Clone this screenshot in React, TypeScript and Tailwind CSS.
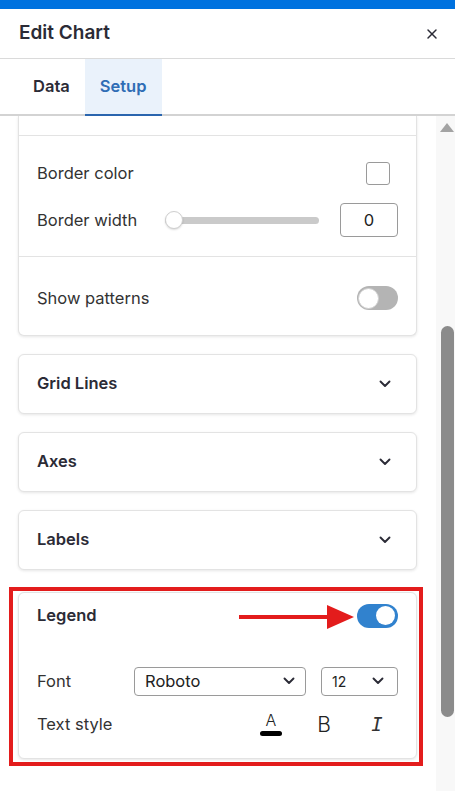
import React from 'react';
import { X } from 'lucide-react';

const cardClass =
  'bg-white border border-[#e3e3e3] rounded-[6px] shadow-[0_1px_3px_rgba(0,0,0,0.10)]';

const Chevron: React.FC<{ className?: string }> = ({ className }) => (
  <svg width="12" height="8" viewBox="0 0 12 8" className={className} fill="none">
    <path d="M1.5 1.5 L6 6 L10.5 1.5" stroke="#2b2b36" strokeWidth="1.9" strokeLinecap="round" strokeLinejoin="round" />
  </svg>
);

const Toggle: React.FC<{ on?: boolean }> = ({ on }) => (
  <div
    className={
      on
        ? 'w-[41px] h-[24px] rounded-full bg-[#3182ce] flex items-center justify-end pr-[3px]'
        : 'w-[41px] h-[24px] rounded-full bg-[#b4b4b4] flex items-center justify-start pl-[1px]'
    }
  >
    <div className={on ? 'w-[19px] h-[19px] rounded-full bg-white' : 'w-[21px] h-[21px] rounded-full bg-white border border-[#d0d0d0]'} />
  </div>
);

const CollapsedSection: React.FC<{ title: string }> = ({ title }) => (
  <div className={`${cardClass} h-[60px] flex items-center justify-between pl-[18px] pr-[25px]`}>
    <span className="text-[16.5px] font-semibold text-[#2b2b36]">{title}</span>
    <Chevron />
  </div>
);

export default function App() {
  return (
    <div className="w-[455px] h-[791px] bg-white overflow-hidden flex flex-col font-['Inter',sans-serif]">
      <div className="h-[9px] bg-[#0072df] shrink-0" />

      <header className="h-[50px] shrink-0 flex items-center justify-between pl-[19px] pr-[15px] border-b border-[#dadada]">
        <h1 className="text-[19px] font-semibold text-[#2b2b36]">Edit Chart</h1>
        <X className="w-[16px] h-[16px] text-[#2b2b36]" strokeWidth={2.2} />
      </header>

      <nav className="h-[57px] shrink-0 flex pl-[18px] border-b-2 border-[#d3d3d3]">
        <div className="px-[15px] flex items-center text-[16.5px] font-semibold text-[#2b2b36]">Data</div>
        <div className="px-[15px] flex items-center text-[16.5px] font-semibold text-[#2f6db5] bg-[#eaf2fb] border-b-2 border-[#2a65ae] -mb-[2px]">
          Setup
        </div>
      </nav>

      <div className="flex flex-1 min-h-0">
        <div className="flex-1 overflow-hidden pl-[18px] pr-[19px] flex flex-col">
          {/* partly scrolled card */}
          <div className="bg-white border-x border-b border-[#e3e3e3] rounded-b-[6px] shadow-[0_1px_3px_rgba(0,0,0,0.10)] shrink-0">
            <div className="h-[19px]" />
            <div className="border-t border-[#e3e3e3] px-[18px] pt-[26px] pb-[19px] text-[16.5px] text-[#333333]">
              <div className="h-[23px] flex items-center justify-between">
                <span>Border color</span>
                <div className="w-[24px] h-[23px] border border-[#9a9a9a] rounded-[3px] mr-[8px]" />
              </div>
              <div className="h-[34px] mt-[18px] flex items-center">
                <span className="w-[128px]">Border width</span>
                <div className="relative w-[154px] h-[18px] flex items-center">
                  <div className="w-full h-[7px] rounded-full bg-[#cacaca]" />
                  <div className="absolute left-0 top-0 w-[18px] h-[18px] rounded-full bg-white border border-[#cfcfcf] shadow-[0_1px_2px_rgba(0,0,0,0.15)]" />
                </div>
                <div className="ml-auto w-[58px] h-[34px] border border-[#9a9a9a] rounded-[4px] flex items-center justify-center text-[#222]">
                  0
                </div>
              </div>
            </div>
            <div className="border-t border-[#e3e3e3] px-[18px] pt-[29px] pb-[24px] flex items-center justify-between text-[16.5px] text-[#333333]">
              <span>Show patterns</span>
              <Toggle />
            </div>
          </div>

          <div className="mt-[18px] flex flex-col gap-[18px] shrink-0">
            <CollapsedSection title="Grid Lines" />
            <CollapsedSection title="Axes" />
            <CollapsedSection title="Labels" />
          </div>

          {/* highlighted legend card */}
          <div className="relative mt-[17px] -ml-[9px] -mr-[6px] border-4 border-[#e31c1c] pl-[5px] pr-[2px] pt-[1px] pb-[3px] shrink-0">
            <div className={`${cardClass} px-[18px] pt-[11px] pb-[19px]`}>
              <div className="h-[24px] flex items-center justify-between">
                <span className="text-[16.5px] font-semibold text-[#2b2b36]">Legend</span>
                <Toggle on />
              </div>
              <div className="mt-[39px] h-[29px] flex items-center text-[16.5px] text-[#333333]">
                <span className="w-[97px]">Font</span>
                <div className="w-[172px] h-[29px] border border-[#9a9a9a] rounded-[4px] flex items-center justify-between pl-[10px] pr-[10px]">
                  <span className="text-[#222]">Roboto</span>
                  <Chevron />
                </div>
                <div className="ml-auto w-[77px] h-[29px] border border-[#9a9a9a] rounded-[4px] flex items-center justify-between pl-[10px] pr-[13px]">
                  <span className="text-[14px] text-[#222]">12</span>
                  <Chevron />
                </div>
              </div>
              <div className="mt-[14px] h-[29px] flex items-center text-[16.5px] text-[#333333]">
                <span>Text style</span>
                <div className="ml-auto flex items-center gap-[29px] pr-[9px]">
                  <div className="w-[24px] flex flex-col items-center">
                    <span className="text-[16px] leading-[17px] font-light text-[#222]">A</span>
                    <div className="w-[22px] h-[5px] rounded-full bg-black mt-[2px]" />
                  </div>
                  <span className="w-[24px] text-center text-[21px] font-light text-[#222]">B</span>
                  <span className="w-[24px] text-center text-[19px] italic font-['DejaVu_Sans_Mono',monospace] text-[#333]">I</span>
                </div>
              </div>
            </div>
            <svg className="absolute left-[226px] top-[13px]" width="115" height="26" viewBox="0 0 115 26">
              <path d="M0 13 L92 13" stroke="#e31c1c" strokeWidth="4" />
              <path d="M88 1 L115 13 L88 25 Z" fill="#e31c1c" />
            </svg>
          </div>
        </div>

        {/* scrollbar */}
        <div className="w-[19px] bg-[#f8f8f8] flex flex-col items-center shrink-0">
          <svg className="mt-[7px] ml-[2px]" width="14" height="9" viewBox="0 0 14 9">
            <path d="M7 0 L14 9 L0 9 Z" fill="#a3a3a3" />
          </svg>
          <div className="mt-[194px] ml-[3px] w-[13px] h-[391px] rounded-full bg-[#8b8b8b]" />
        </div>
      </div>
    </div>
  );
}
